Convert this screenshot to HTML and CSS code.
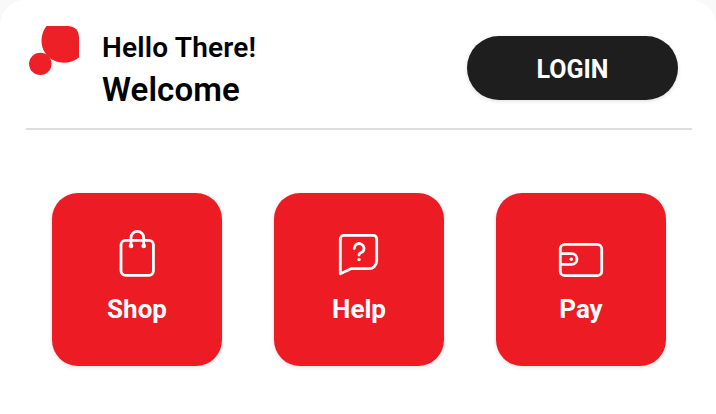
FILE: index.html
```html
<!DOCTYPE html>
<html lang="en">
<head>
<meta charset="utf-8">
<title>Welcome</title>
<link rel="stylesheet" href="styles.css">
</head>
<body>
<main class="sheet">
  <header class="header">
    <svg class="logo" width="50" height="50" viewBox="0 0 50 50"><path d="M17.500 0H38.500Q50 .5 50 12V31.500C45 35.500 40 36.700 35 36.700C22 36.700 12.500 27 12.500 14.500C12.500 9 14.500 3.500 17.500 0Z"/><circle cx="11.300" cy="37.900" r="11.200"/></svg>
    <div class="greeting">
      <p class="hello">Hello There!</p>
      <h1 class="welcome">Welcome</h1>
    </div>
    <button class="login">LOGIN</button>
  </header>
  <nav class="tiles">
    <a class="tile"><svg class="icon" width="50" height="50" viewBox="0 0 50 50"><rect x="9" y="11.300" width="32.400" height="35" rx="4.500"/><path d="M19 17V8.700a6.350 6.350 0 0 1 12.700 0V17"/><circle class="dot" cx="19" cy="17" r="2.300"/><circle class="dot" cx="31.700" cy="17" r="2.300"/></svg><span>Shop</span></a>
    <a class="tile"><svg class="icon" width="50" height="50" viewBox="0 0 50 50"><path d="M6.300 44.700V10a3.700 3.700 0 0 1 3.700-3.700h29.200a3.500 3.500 0 0 1 3.500 3.500V32a7.700 7.700 0 0 1-7.700 7.700H17Z"/><path d="M20.200 19.500a4.900 4.900 0 1 1 8.300 3.500Q25 24.200 25 26"/><circle class="dot" cx="25" cy="30.600" r="1.700"/></svg><span>Help</span></a>
    <a class="tile"><svg class="icon" width="50" height="50" viewBox="0 0 50 50"><rect x="4.300" y="15.300" width="41.400" height="31.400" rx="4.500"/><path d="M4.300 24.700h11.400a5.300 5.300 0 0 1 0 10.600H4.300"/><circle class="dot" cx="15.300" cy="30.300" r="1.700"/></svg><span>Pay</span></a>
  </nav>
</main>
</body>
</html>
```
FILE: styles.css
```css
* { box-sizing: border-box; }
body { margin: 0; background: #f9f9f9; font-family: Roboto, sans-serif; }
.sheet { height: 414px; padding: 0 24px 0 26px; background: #fff; border-radius: 26px 26px 0 0; }
.header { display: flex; height: 130px; padding: 26px 14px 0 3px; border-bottom: 2px solid #dedede; }
.logo { fill: #ed2027; }
.greeting { flex: 1; margin-left: 23px; }
.hello, .welcome { margin: 0; color: #000; font-weight: 600; }
.hello { padding-top: 1px; font-size: 28px; line-height: 41px; letter-spacing: 0.2px; }
.welcome { font-size: 33px; line-height: 44px; letter-spacing: 0.1px; }
.login { width: 211px; height: 64px; margin-top: 10px; padding: 2px 0 0; border: 0; border-radius: 32px; background: #1e1e1e; color: #fff; font: 700 25px Roboto, sans-serif; box-shadow: 0 1px 4px #0002; }
.tiles { display: flex; gap: 52px; padding: 63px 26px 0; }
.tile { display: flex; flex-direction: column; align-items: center; width: 170px; height: 173px; padding-top: 36px; border-radius: 26px; background: #ed1c24; color: #fff; font-size: 26px; font-weight: 700; line-height: 30px; box-shadow: 0 1px 4px #0002; }
.tile span { margin-top: 15px; }
.icon { fill: none; stroke: #fff; stroke-width: 2.800; stroke-linecap: round; stroke-linejoin: round; }
.dot { fill: #fff; stroke: none; }
```
